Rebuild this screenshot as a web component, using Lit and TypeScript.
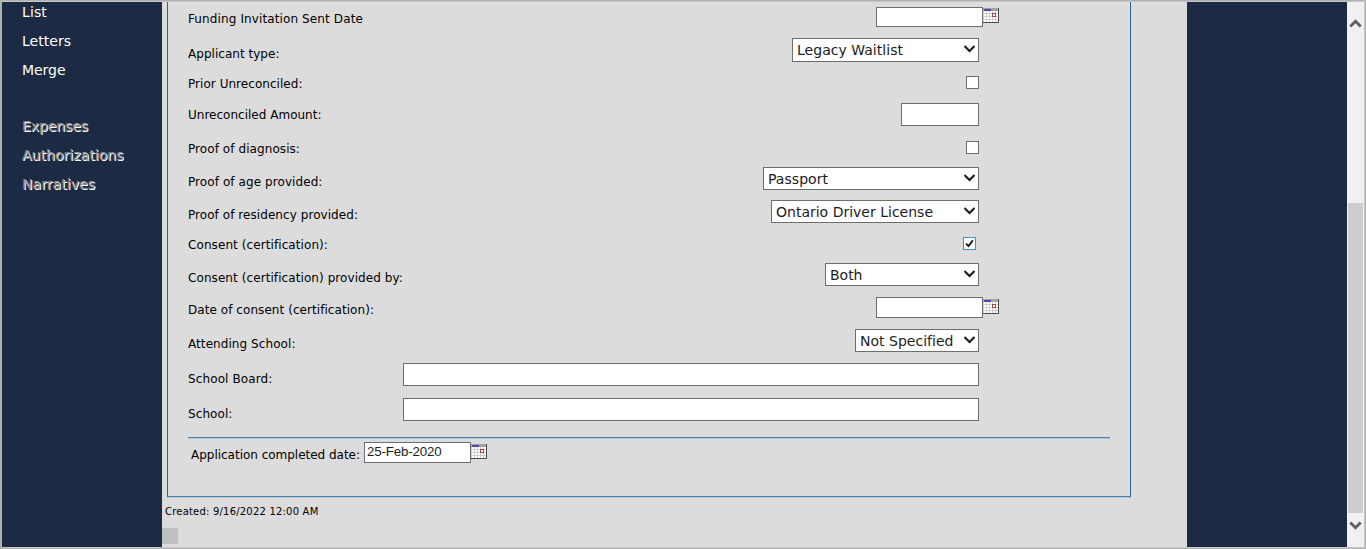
import { LitElement, html, css, svg, nothing } from "lit";
import { customElement, property } from "lit/decorators.js";

/** A single line of text whose tracking is computed from its advance width. */
@customElement("fit-text")
class FitText extends LitElement {
  @property() text = "";
  @property({ type: Number }) w = 0;
  static styles = css`
    :host { display: block; white-space: pre; }
    .t { display: inline-block; }
  `;
  firstUpdated() {
    const el = this.renderRoot.querySelector(".t") as HTMLElement;
    const width = el.getBoundingClientRect().width;
    el.style.letterSpacing = `${(this.w - width) / this.text.length}px`;
  }
  render() {
    return html`<span class="t">${this.text}</span>`;
  }
}

@customElement("calendar-icon")
class CalendarIcon extends LitElement {
  static styles = css`:host, svg { display: block; width: 16px; height: 15px; flex: none; }`;
  render() {
    return html`<svg viewBox="0 0 16 15" shape-rendering="crispEdges">
      <rect width="16" height="15" fill="#d0cfd3" />
      ${[1, 4, 7, 10, 13].map((x) => [3, 6, 9, 12].map((y) => svg`<rect x=${x} y=${y} width="2" height="2" fill="#fff" />`))}
      <rect width="16" height="3" fill="#a3a3a3" />
      <rect x="1" y="1" width="7" height="2" fill="#4a4aa8" />
      <rect x="9.5" y="5.5" width="3" height="3" fill="#fff" stroke="#a04848" />
      <path d="M15.5 0V14.5H0" fill="none" stroke="#4c4c4c" />
    </svg>`;
  }
}

type Row = {
  label: string; lw: number; gap: number; h: number;
  kind: "date" | "select" | "check" | "text";
  w: number; ch: number; value?: string; vw?: number; checked?: boolean; iconTop?: number;
};

const rows: Row[] = [
  { label: "Funding Invitation Sent Date", lw: 175, gap: 4, h: 31, kind: "date", w: 107, ch: 20, iconTop: 1 },
  { label: "Applicant type:", lw: 91.5, gap: 8, h: 38, kind: "select", w: 187, ch: 24, value: "Legacy Waitlist", vw: 106 },
  { label: "Prior Unreconciled:", lw: 114.5, gap: 0, h: 27, kind: "check", w: 13, ch: 13 },
  { label: "Unreconciled Amount:", lw: 133.5, gap: 4, h: 38, kind: "text", w: 78, ch: 23 },
  { label: "Proof of diagnosis:", lw: 112, gap: 0, h: 26, kind: "check", w: 13, ch: 13 },
  { label: "Proof of age provided:", lw: 134.5, gap: 7, h: 33, kind: "select", w: 216, ch: 23, value: "Passport", vw: 60 },
  { label: "Proof of residency provided:", lw: 170, gap: 7, h: 37, kind: "select", w: 208, ch: 23, value: "Ontario Driver License", vw: 157 },
  { label: "Consent (certification):", lw: 140, gap: 0, h: 26, kind: "check", w: 13, ch: 13, checked: true },
  { label: "Consent (certification) provided by:", lw: 215, gap: 7, h: 34, kind: "select", w: 154, ch: 23, value: "Both", vw: 32.5 },
  { label: "Date of consent (certification):", lw: 186, gap: 5, h: 32, kind: "date", w: 107, ch: 21, iconTop: 2 },
  { label: "Attending School:", lw: 107.5, gap: 7, h: 34, kind: "select", w: 124, ch: 23, value: "Not Specified", vw: 93.5 },
  { label: "School Board:", lw: 84.5, gap: 8, h: 35, kind: "text", w: 576, ch: 23 },
  { label: "School:", lw: 44.5, gap: 8, h: 39, kind: "text", w: 576, ch: 23 },
];

const links: [string, number][] = [["List", 25], ["Letters", 49], ["Merge", 43.5]];
const disabled: [string, number][] = [["Expenses", 66], ["Authorizations", 101.5], ["Narratives", 73]];

@customElement("app-root")
class AppRoot extends LitElement {
  static styles = css`
    * { box-sizing: border-box; }
    :host { display: block; width: 1366px; height: 549px; overflow: hidden; font-family: "DejaVu Sans", sans-serif; }
    .frame { display: flex; width: 1366px; height: 549px; background: #dcdcdc; border: 1px solid #b0b0b0; }
    .inner { display: flex; flex: 1; border: 1px solid #c8c8c8; border-left-color: #b4b4b4; }
    .side { width: 160px; flex: none; background: #1d2a43; color: #fff; font-size: 14px; line-height: 29px; padding-left: 20px; display: flex; flex-direction: column; overflow: hidden; }
    .links { display: flex; flex-direction: column; margin-top: -4px; }
    .dis { margin-top: 27px; color: #8d8f92; text-shadow: 1px 1px 0 #fff; }
    .main { width: 1025px; flex: none; display: flex; flex-direction: column; }
    .panel { margin-left: 5px; width: 964px; height: 495px; border: 1px solid #2e6690; border-top: 0; border-bottom-color: #5080a5; box-shadow: 0 1px 0 #b3c5d5; padding: 5px 20px 0 20px; font-size: 12px; line-height: 16px; color: #000; }
    .row { display: flex; align-items: flex-start; justify-content: space-between; width: 791px; }
    .row.date { width: 811px; }
    .row.on { width: 788px; }
    .ctl { display: flex; align-items: flex-start; }
    .box { background: #fff; border: 1px solid #6e6e6e; display: flex; justify-content: space-between; font-size: 14px; line-height: 22px; color: #1c1c1c; }
    .box.select { padding: 0 4px; }
    .box.on { border-color: #3399cc; }
    .box svg { display: block; flex: none; }
    .chev { width: 11px; height: 8px; margin-top: 6px; margin-right: -1px; }
    .done { display: flex; align-items: flex-start; border-top: 1px solid #5080a5; width: 922px; padding: 4px 0 0 3px; box-shadow: inset 0 1px 0 #b3c5d5; }
    .done .lab { margin-top: 5px; width: 173px; }
    .done .box { width: 107px; height: 21px; padding-left: 2px; font: 13.333px/17px "Liberation Sans", sans-serif; }
    .created { margin: 9px 0 0 3px; font-size: 10px; line-height: 12px; color: #000; }
    .stub { width: 16px; height: 16px; background: #c0c0c0; margin-top: 10px; }
    .right { flex: none; width: 160px; background: #1d2a43; }
    .scroll { flex: 1; background: #f0f0f0; display: flex; flex-direction: column; align-items: flex-start; padding-left: 1px; }
    .scroll svg { display: block; width: 15px; height: 9px; flex: none; }
    .up { margin-top: 17px; }
    .thumb { width: 15px; height: 310px; margin-top: 175px; background: #cdcdcd; }
    .down { margin-top: 8px; }
  `;

  control(r: Row) {
    const style = `width:${r.w}px;height:${r.ch}px`;
    return html`<div class="ctl">
      <div class="box ${r.kind} ${r.checked ? "on" : ""}" style=${style}>
        ${r.kind === "select"
          ? html`<fit-text .text=${r.value!} .w=${r.vw!}></fit-text>
              <svg class="chev" viewBox="0 0 11 8"><path d="M.5 1 5.5 6 10.5 1" fill="none" stroke="#1c1c1c" stroke-width="2.1" /></svg>`
          : nothing}
        ${r.checked
          ? html`<svg width="11" height="11" viewBox="0 0 11 11"><path d="M2 5.6 4.5 8 8.8 2.3" fill="none" stroke="#1c1c1c" stroke-width="2" /></svg>`
          : nothing}
      </div>
      ${r.kind === "date" ? html`<calendar-icon style="margin-top:${r.iconTop}px"></calendar-icon>` : nothing}
    </div>`;
  }

  render() {
    return html`<div class="frame"><div class="inner">
      <nav class="side">
        <div class="links">${links.map(([t, w]) => html`<fit-text .text=${t} .w=${w}></fit-text>`)}</div>
        <div class="dis">${disabled.map(([t, w]) => html`<fit-text .text=${t} .w=${w}></fit-text>`)}</div>
      </nav>
      <main class="main">
        <section class="panel">
          ${rows.map((r) => html`<div class="row ${r.kind} ${r.checked ? "on" : ""}" style="height:${r.h}px">
            <fit-text style="margin-top:${r.gap}px" .text=${r.label} .w=${r.lw}></fit-text>
            ${this.control(r)}
          </div>`)}
          <div class="done">
            <fit-text class="lab" .text=${"Application completed date:"} .w=${169}></fit-text>
            <div class="box"><fit-text .text=${"25-Feb-2020"} .w=${74.5}></fit-text></div>
            <calendar-icon style="margin-top:2px"></calendar-icon>
          </div>
        </section>
        <fit-text class="created" .text=${"Created: 9/16/2022 12:00 AM"} .w=${153.5}></fit-text>
        <div class="stub"></div>
      </main>
      <div class="right"></div>
      <div class="scroll">
        <svg class="up" viewBox="0 0 15 9"><path d="M2.3 7.5 7.5 2.3 12.7 7.5" fill="none" stroke="#606060" stroke-width="2.8" /></svg>
        <div class="thumb"></div>
        <svg class="down" viewBox="0 0 15 9"><path d="M2.3 1.5 7.5 6.7 12.7 1.5" fill="none" stroke="#606060" stroke-width="2.8" /></svg>
      </div>
    </div></div>`;
  }
}
